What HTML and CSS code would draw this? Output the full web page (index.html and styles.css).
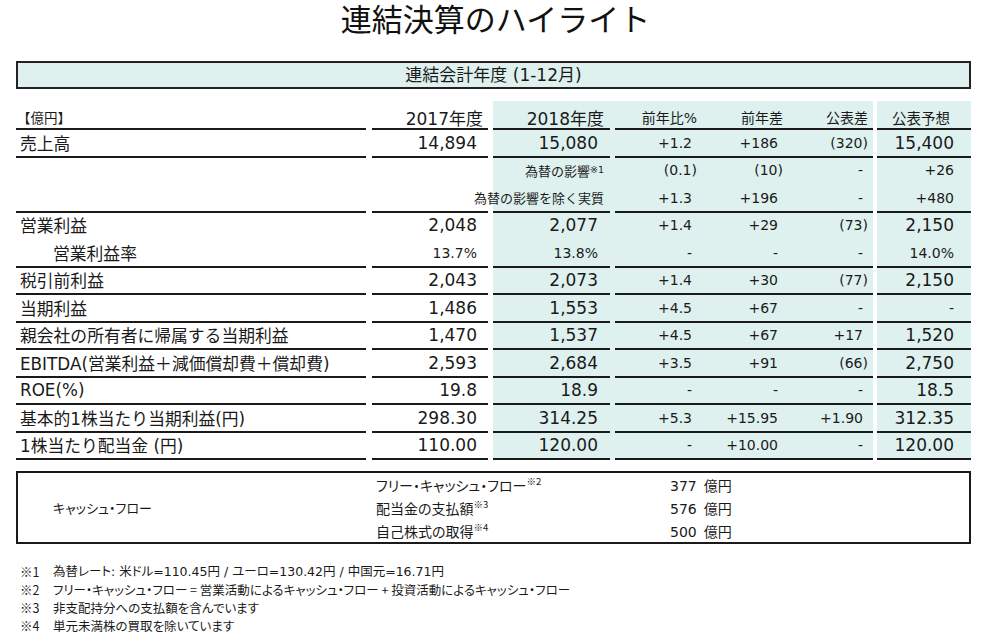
FILE: index.html
```html
<!DOCTYPE html>
<html lang="ja">
<head>
<meta charset="utf-8">
<title>連結決算のハイライト</title>
<link rel="stylesheet" href="styles.css">
</head>
<body>
<h1 class="title">連結決算のハイライト</h1>
<div class="period">連結会計年度 (1-12月)</div>

<div class="table">
  <div class="row head ln">
    <div class="c c1 unit">【億円】</div>
    <div class="c c2">2017年度</div>
    <div class="c c3">2018年度</div>
    <div class="c c4 hs">前年比%</div>
    <div class="c c5 hs">前年差</div>
    <div class="c c6 hs">公表差</div>
    <div class="c c7 hs">公表予想</div>
  </div>

  <div class="row ln">
    <div class="c c1">売上高</div>
    <div class="c c2">14,894</div>
    <div class="c c3">15,080</div>
    <div class="c c4">+1.2</div>
    <div class="c c5">+186</div>
    <div class="c c6"><span class="p">(320)</span></div>
    <div class="c c7">15,400</div>
  </div>

  <div class="row">
    <div class="c c1"></div>
    <div class="c c2"></div>
    <div class="c c3 sub">為替の影響<sup>※1</sup></div>
    <div class="c c4"><span class="p">(0.1)</span></div>
    <div class="c c5"><span class="p">(10)</span></div>
    <div class="c c6">-</div>
    <div class="c c7 small">+26</div>
  </div>

  <div class="row ln">
    <div class="c c1"></div>
    <div class="c c2"></div>
    <div class="c c3 sub">為替の影響を除く実質</div>
    <div class="c c4">+1.3</div>
    <div class="c c5">+196</div>
    <div class="c c6">-</div>
    <div class="c c7 small">+480</div>
  </div>

  <div class="row">
    <div class="c c1">営業利益</div>
    <div class="c c2">2,048</div>
    <div class="c c3">2,077</div>
    <div class="c c4">+1.4</div>
    <div class="c c5">+29</div>
    <div class="c c6"><span class="p">(73)</span></div>
    <div class="c c7">2,150</div>
  </div>

  <div class="row ln">
    <div class="c c1 indent">営業利益率</div>
    <div class="c c2 small">13.7%</div>
    <div class="c c3 small">13.8%</div>
    <div class="c c4">-</div>
    <div class="c c5">-</div>
    <div class="c c6">-</div>
    <div class="c c7 small">14.0%</div>
  </div>

  <div class="row ln">
    <div class="c c1">税引前利益</div>
    <div class="c c2">2,043</div>
    <div class="c c3">2,073</div>
    <div class="c c4">+1.4</div>
    <div class="c c5">+30</div>
    <div class="c c6"><span class="p">(77)</span></div>
    <div class="c c7">2,150</div>
  </div>

  <div class="row ln">
    <div class="c c1">当期利益</div>
    <div class="c c2">1,486</div>
    <div class="c c3">1,553</div>
    <div class="c c4">+4.5</div>
    <div class="c c5">+67</div>
    <div class="c c6">-</div>
    <div class="c c7 small">-</div>
  </div>

  <div class="row ln">
    <div class="c c1">親会社の所有者に帰属する当期利益</div>
    <div class="c c2">1,470</div>
    <div class="c c3">1,537</div>
    <div class="c c4">+4.5</div>
    <div class="c c5">+67</div>
    <div class="c c6">+17</div>
    <div class="c c7">1,520</div>
  </div>

  <div class="row ln">
    <div class="c c1">EBITDA(営業利益＋減価償却費＋償却費)</div>
    <div class="c c2">2,593</div>
    <div class="c c3">2,684</div>
    <div class="c c4">+3.5</div>
    <div class="c c5">+91</div>
    <div class="c c6"><span class="p">(66)</span></div>
    <div class="c c7">2,750</div>
  </div>

  <div class="row ln">
    <div class="c c1">ROE(%)</div>
    <div class="c c2">19.8</div>
    <div class="c c3">18.9</div>
    <div class="c c4">-</div>
    <div class="c c5">-</div>
    <div class="c c6">-</div>
    <div class="c c7">18.5</div>
  </div>

  <div class="row ln">
    <div class="c c1">基本的1株当たり当期利益(円)</div>
    <div class="c c2">298.30</div>
    <div class="c c3">314.25</div>
    <div class="c c4">+5.3</div>
    <div class="c c5">+15.95</div>
    <div class="c c6">+1.90</div>
    <div class="c c7">312.35</div>
  </div>

  <div class="row ln">
    <div class="c c1">1株当たり配当金 (円)</div>
    <div class="c c2">110.00</div>
    <div class="c c3">120.00</div>
    <div class="c c4">-</div>
    <div class="c c5">+10.00</div>
    <div class="c c6">-</div>
    <div class="c c7">120.00</div>
  </div>
</div>

<div class="cf">
  <div class="cf-title">キャッシュ・フロー</div>
  <div class="cf-list">
    <div class="cf-label">フリー・キャッシュ・フロー<sup>※2</sup></div>
    <div class="cf-val">377<span class="yen">億円</span></div>
    <div class="cf-label">配当金の支払額<sup>※3</sup></div>
    <div class="cf-val">576<span class="yen">億円</span></div>
    <div class="cf-label">自己株式の取得<sup>※4</sup></div>
    <div class="cf-val">500<span class="yen">億円</span></div>
  </div>
</div>

<div class="notes">
  <div class="note note-num"><span class="mk">※1</span><span>為替レート: 米ドル=110.45円 / ユーロ=130.42円 / 中国元=16.71円</span></div>
  <div class="note"><span class="mk">※2</span><span>フリー・キャッシュ・フロー = 営業活動によるキャッシュ・フロー + 投資活動によるキャッシュ・フロー</span></div>
  <div class="note"><span class="mk">※3</span><span>非支配持分への支払額を含んでいます</span></div>
  <div class="note"><span class="mk">※4</span><span>単元未満株の買取を除いています</span></div>
</div>
</body>
</html>
```

FILE: styles.css
```css
html, body {
  margin: 0;
  padding: 0;
}

body {
  width: 991px;
  height: 632px;
  overflow: hidden;
  background: #ffffff;
  color: #1a1a1a;
  font-family: "DejaVu Sans", "Noto Sans CJK JP", sans-serif;
}

.title {
  margin: -4px 0 0 0;
  height: 44px;
  line-height: 44px;
  font-size: 31px;
  font-weight: 400;
  text-align: center;
  font-family: "Noto Sans CJK JP", sans-serif;
  color: #111;
}

.period {
  margin: 21px 0 0 16px;
  width: 955px;
  height: 28px;
  box-sizing: border-box;
  border: 2px solid #222;
  background: #dff1ef;
  text-align: center;
  font-size: 17px;
  line-height: 24px;
}

.table {
  margin: 12px 0 0 16px;
  width: 955px;
}

.row {
  display: flex;
  height: 27.5px;
}

.row.head {
  height: 29px;
}

.c {
  box-sizing: border-box;
  display: flex;
  align-items: center;
  justify-content: flex-end;
  white-space: nowrap;
  padding-bottom: 2px;
  font-size: 17px;
}

.c1 {
  width: 350px;
  justify-content: flex-start;
  padding-left: 4px;
  font-size: 16.8px;
}

.c2 {
  width: 116px;
  margin-left: 6px;
  padding-right: 11px;
}

.c3 {
  width: 122px;
  margin-left: 5px;
  padding-right: 17px;
  background-color: #dff1ef;
}

.c4, .c5, .c6 {
  padding-right: 10px;
  background-color: #dff1ef;
  font-size: 14px;
}

.c4 { width: 87px; }
.c5 { width: 86px; }
.c6 { width: 85px; }

.c7 {
  width: 94px;
  margin-left: 4px;
  padding-right: 17px;
  background-color: #dff1ef;
}

.ln .c {
  background-image: linear-gradient(#1a1a1a, #1a1a1a);
  background-repeat: no-repeat;
  background-position: left bottom;
  background-size: 100% 2px;
}

.ln .c3 {
  background-size: 117px 2px;
}

.head .c {
  padding-top: 5px;
}

.head .c2 { padding-right: 5px; }
.head .c3 { padding-right: 11px; }
.head .hs { padding-right: 5px; font-size: 14px; }
.head .c7 { padding-right: 21px; font-size: 14.5px; }

.unit {
  font-size: 13.5px;
  padding-left: 1px;
}

.indent {
  padding-left: 37px;
}

.small {
  font-size: 14px;
}

.sub {
  padding-right: 11px;
  font-size: 13px;
}

.p {
  margin-right: -5px;
}

sup {
  font-size: 9.5px;
  vertical-align: 6px;
  line-height: 0;
}

.cf {
  margin: 11px 0 0 16px;
  width: 955px;
  height: 73px;
  box-sizing: border-box;
  border: 2px solid #1a1a1a;
  display: flex;
  font-family: "Noto Sans CJK JP", sans-serif;
}

.cf-title {
  width: 358px;
  box-sizing: border-box;
  padding-left: 35px;
  display: flex;
  align-items: center;
  font-size: 13px;
  font-feature-settings: "palt";
}

.cf-list {
  display: grid;
  grid-template-columns: 294px auto;
  grid-auto-rows: 23px;
  padding-top: 1px;
  font-size: 14px;
  line-height: 23px;
}

.cf-label {
  font-feature-settings: "palt";
  white-space: nowrap;
}

.cf-val {
  font-family: "DejaVu Sans", "Noto Sans CJK JP", sans-serif;
  white-space: nowrap;
}

.yen {
  margin-left: 7px;
  font-family: "Noto Sans CJK JP", sans-serif;
}

.notes {
  margin: 19px 0 0 20px;
  font-size: 12.5px;
  line-height: 18px;
  font-family: "Noto Sans CJK JP", sans-serif;
  font-feature-settings: "palt";
}

.note {
  display: flex;
  white-space: nowrap;
}

.note-num {
  font-family: "DejaVu Sans", "Noto Sans CJK JP", sans-serif;
}

.mk {
  width: 33px;
  flex: none;
  font-family: "Noto Sans CJK JP", sans-serif;
}
```
